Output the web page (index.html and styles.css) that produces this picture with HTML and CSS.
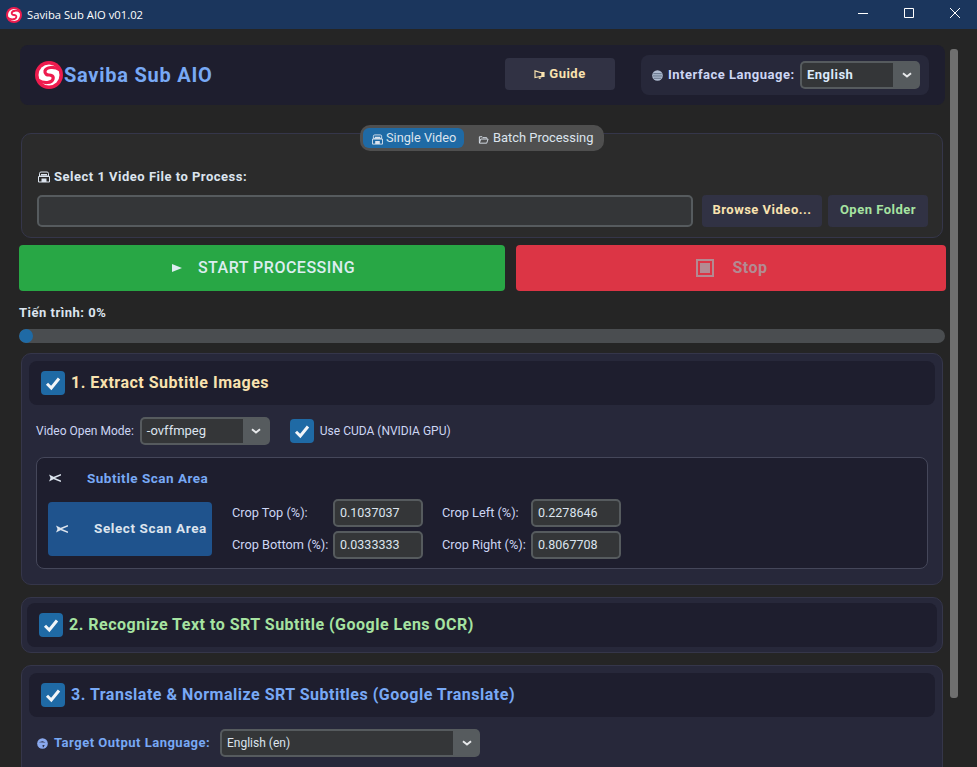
FILE: index.html
```html
<!DOCTYPE html>
<html lang="en">
<head>
<meta charset="utf-8">
<title>Saviba Sub AIO v01.02</title>
<link rel="stylesheet" href="styles.css">
</head>
<body>
<svg class="defs" width="0" height="0" aria-hidden="true">
  <symbol id="logo" viewBox="0 0 28 28">
    <circle cx="14" cy="14" r="14" fill="#ee1c4e"/>
    <circle cx="14" cy="14" r="10.5" fill="#fff"/>
    <path d="M25 9C19.500 5 11 6 10 10 9.500 13 12 14 14 14 16 14 19 15 18 18 17 22 9 23 3 19" fill="none" stroke="#ee1c4e" stroke-width="3.200"/>
  </symbol>
  <symbol id="floppy" viewBox="0 0 12 12">
    <path d="M1.500 2.500Q1.500 1 3 1H9Q10.500 1 10.500 2.500V5H1.500z" fill="none" stroke="currentColor"/>
    <path d="M.5 5.500H11.500V11H.5z" fill="none" stroke="currentColor"/>
    <path d="M3 3H9V4.500H3zM3.500 7.500H8.500V11H3.500z" fill="currentColor"/>
  </symbol>
  <symbol id="folder" viewBox="0 0 12 12">
    <path d="M1.500 9.500V3H4.500L5.500 4H9.500V5M1.500 10H9.500L11 5.500H3L1.500 10z" fill="none" stroke="currentColor"/>
  </symbol>
  <symbol id="scissors" viewBox="0 0 12 8">
    <path d="M0 .5 4 2.500 6.500 4 4 5.500 0 7.500 1.500 4z" fill="currentColor"/>
    <path d="M4.500 3.800 12 .8M4.500 4.200 12 7.200" stroke="currentColor" stroke-width="1.500" fill="none"/>
  </symbol>
  <symbol id="megaphone" viewBox="0 0 12 10">
    <path d="M11 1V8.500L4 7H1V3H4z" fill="none" stroke="currentColor" stroke-width="1.300"/>
    <path d="M1 3H4V7H1z" fill="currentColor"/>
    <path d="M4 7 5 9.500H6.500L6 7.500" fill="none" stroke="currentColor"/>
  </symbol>
  <symbol id="globe" viewBox="0 0 12 12">
    <circle cx="6" cy="6" r="5.800" fill="currentColor"/>
    <path d="M1.500 4H10.500M1 6.500H11M2 9H10" stroke="#5c6a80" stroke-width="1" fill="none"/>
  </symbol>
  <symbol id="earth" viewBox="0 0 12 12">
    <circle cx="6" cy="6" r="5.800" fill="currentColor"/>
    <path d="M2 4.500 6 3.500 9.500 5M6 7.500 8.500 8 6.500 10.500z" fill="#27283a"/>
  </symbol>
  <symbol id="check" viewBox="0 0 24 24">
    <path d="M6 12.800 10.300 17 18 7.500" fill="none" stroke="#f2f5f8" stroke-width="3"/>
  </symbol>
  <symbol id="chevron" viewBox="0 0 10 6">
    <path d="M1 1.200 5 4.500 9 1.200" fill="none" stroke="#e6e8ea" stroke-width="2"/>
  </symbol>
</svg>

<header class="titlebar">
  <svg class="titlebar-logo"><use href="#logo"/></svg>
  <span class="titlebar-text">Saviba Sub AIO v01.02</span>
  <div class="window-controls">
    <svg class="win-btn" viewBox="0 0 46 29"><path d="M18 13.500H28" stroke="#fff" fill="none"/></svg>
    <svg class="win-btn" viewBox="0 0 46 29"><path d="M18.500 8.500H27.500V17.500H18.500z" stroke="#fff" fill="none"/></svg>
    <svg class="win-btn" viewBox="0 0 46 29"><path d="M18 8 28 18M28 8 18 18" stroke="#fff" fill="none"/></svg>
  </div>
</header>

<main class="app">
  <div class="scrollbar"></div>
  <div class="content">
    <section class="hero">
      <div class="brand">
        <svg class="brand-logo"><use href="#logo"/></svg>
        <span class="brand-name">Saviba Sub AIO</span>
      </div>
      <button class="btn btn-guide"><svg class="ico-megaphone"><use href="#megaphone"/></svg>Guide</button>
      <div class="lang-panel">
        <svg class="ico-globe"><use href="#globe"/></svg>
        <span class="lang-label">Interface Language:</span>
        <div class="combo combo-lang">
          <div class="combo-field combo-field-bold">English</div>
          <div class="combo-arrow"><svg class="chevron"><use href="#chevron"/></svg></div>
        </div>
      </div>
    </section>

    <section class="input-group">
      <div class="tabs">
        <div class="tab tab-active"><svg class="ico-tab"><use href="#floppy"/></svg>Single Video</div>
        <div class="tab"><svg class="ico-tab"><use href="#folder"/></svg>Batch Processing</div>
      </div>
      <div class="field-label"><svg class="ico-floppy"><use href="#floppy"/></svg>Select 1 Video File to Process:</div>
      <div class="file-row">
        <input class="file-input" type="text" readonly>
        <button class="btn btn-browse">Browse Video...</button>
        <button class="btn btn-open">Open Folder</button>
      </div>
    </section>

    <div class="actions">
      <button class="action action-start"><span class="play"></span>START PROCESSING</button>
      <button class="action action-stop"><span class="stop-icon"></span>Stop</button>
    </div>

    <div class="progress-label">Tiến trình: 0%</div>
    <div class="progress"><div class="progress-chunk"></div></div>

    <section class="card card-one">
      <div class="card-head">
        <span class="checkbox"><svg class="check"><use href="#check"/></svg></span>
        <h2 class="card-title title-yellow">1. Extract Subtitle Images</h2>
      </div>
      <div class="mode-row">
        <span class="plain-label">Video Open Mode:</span>
        <div class="combo combo-mode">
          <div class="combo-field combo-field-mode">-ovffmpeg</div>
          <div class="combo-arrow"><svg class="chevron"><use href="#chevron"/></svg></div>
        </div>
        <span class="checkbox checkbox-cuda"><svg class="check"><use href="#check"/></svg></span>
        <span class="plain-label">Use CUDA (NVIDIA GPU)</span>
      </div>
      <div class="scan">
        <div class="scan-title"><svg class="ico-scissors"><use href="#scissors"/></svg><span>Subtitle Scan Area</span></div>
        <div class="scan-body">
          <button class="btn-scan"><svg class="ico-scissors"><use href="#scissors"/></svg><span>Select Scan Area</span></button>
          <div class="crop-grid">
            <span class="crop-label">Crop Top (%):</span>
            <input class="crop-input" type="text" readonly value="0.1037037">
            <span class="crop-label crop-second">Crop Left (%):</span>
            <input class="crop-input" type="text" readonly value="0.2278646">
            <span class="crop-label">Crop Bottom (%):</span>
            <input class="crop-input" type="text" readonly value="0.0333333">
            <span class="crop-label crop-second">Crop Right (%):</span>
            <input class="crop-input" type="text" readonly value="0.8067708">
          </div>
        </div>
      </div>
    </section>

    <section class="card card-two">
      <div class="card-head">
        <span class="checkbox"><svg class="check"><use href="#check"/></svg></span>
        <h2 class="card-title title-green">2. Recognize Text to SRT Subtitle (Google Lens OCR)</h2>
      </div>
    </section>

    <section class="card card-three">
      <div class="card-head">
        <span class="checkbox"><svg class="check"><use href="#check"/></svg></span>
        <h2 class="card-title title-blue">3. Translate &amp; Normalize SRT Subtitles (Google Translate)</h2>
      </div>
      <div class="target-row">
        <svg class="ico-earth"><use href="#earth"/></svg>
        <span class="target-label">Target Output Language:</span>
        <div class="combo combo-target">
          <div class="combo-field">English (en)</div>
          <div class="combo-arrow"><svg class="chevron"><use href="#chevron"/></svg></div>
        </div>
      </div>
    </section>
  </div>
</main>
</body>
</html>
```
FILE: styles.css
```css
* { box-sizing: border-box; }
html, body { margin: 0; padding: 0; height: 100%; overflow: hidden; background: #252525; }
body { font-family: Roboto, "Liberation Sans", sans-serif; font-size: 12px; color: #cdd6f4; width: 977px; height: 767px; }
.defs { display: block; height: 0; }
button { font-family: inherit; border: 0; padding: 0; margin: 0; }
input { font-family: inherit; margin: 0; outline: 0; }

.titlebar { height: 29px; background: #1b365d; display: flex; align-items: center; color: #fff; }
.titlebar-logo { width: 16px; height: 16px; margin-left: 6px; }
.titlebar-text { font-family: "Open Sans", "Noto Sans", sans-serif; font-size: 11.25px; margin-left: 5px; }
.window-controls { margin-left: auto; display: flex; margin-right: -1px; }
.win-btn { width: 46px; height: 29px; display: block; }

.app { position: relative; height: 738px; overflow: hidden; }
.scrollbar { position: absolute; left: 950px; top: 20px; width: 8px; height: 649px; background: #6f6f6f; border-radius: 3px; }
.content { width: 927px; margin-left: 19px; padding-top: 16px; display: flex; flex-direction: column; }

.hero { margin-left: 1px; width: 925px; height: 60px; background: #1e1e2e; border-radius: 8px; display: flex; align-items: center; }
.brand { display: flex; align-items: center; margin-left: 15px; width: 470px; }
.brand-logo { width: 28px; height: 28px; margin-top: -1px; }
.brand-name { font-size: 20px; font-weight: 700; color: #78a9f5; letter-spacing: .75px; margin-left: 1px; margin-top: -1px; }
.btn { border-radius: 4px; background: #313244; font-weight: 700; font-size: 13px; letter-spacing: .5px; height: 32px; padding-bottom: 2px; }
.btn-guide { width: 110px; color: #f9e2af; margin-top: -2px; display: flex; align-items: center; justify-content: center; gap: 4px; }
.ico-megaphone { width: 11px; height: 9px; color: #f9e2af; transform: scaleX(-1); margin-top: 2px; }
.lang-panel { margin-left: 26px; width: 288px; height: 40px; background: #27283a; border-radius: 8px; display: flex; align-items: center; padding-left: 11px; }
.ico-globe { width: 11px; height: 11px; color: #aebbd0; margin-top: 1px; flex: none; }
.lang-label { font-weight: 700; font-size: 13px; margin-left: 5px; margin-top: -1px; letter-spacing: .5px; width: 132px; color: #cdd6f4; white-space: nowrap; }

.combo { display: flex; height: 28px; border-radius: 5px; background: #565b5e; overflow: hidden; flex: none; }
.combo-field { flex: 1; margin: 2px 0 2px 2px; background: #343638; border-radius: 3px 0 0 3px; color: #dce4ee; padding-left: 5px; line-height: 24px; }
.combo-field-bold { font-weight: 700; font-size: 13px; color: #dbe9fb; letter-spacing: .5px; }
.combo-field-mode { font-size: 13px; }
.combo-arrow { width: 27px; display: flex; align-items: center; justify-content: center; }
.chevron { width: 10px; height: 6px; display: block; }
.combo-lang { width: 120px; }
.combo-mode { width: 130px; margin-left: 6px; }
.combo-target { width: 260px; }

.input-group { position: relative; margin-left: 2px; margin-top: 28px; width: 922px; height: 105px; background: #2b2b2b; border: 1px solid #35364a; border-radius: 10px; padding: 34px 14px 0 15px; }
.tabs { position: absolute; left: 338px; top: -9px; width: 244px; height: 26px; background: #4f4f4f; border-radius: 10px; display: flex; align-items: center; padding-left: 3px; }
.tab { display: flex; align-items: center; height: 20px; padding: 0 7px 0 9px; color: #dce4ee; font-size: 12.750px; border-radius: 6px; white-space: nowrap; line-height: 18px; }
.tab:last-child { margin-left: 7px; padding-left: 7px; font-size: 12.900px; }
.tab:last-child .ico-tab { margin-right: 4px; }
.tab-active { background: #1f6aa5; width: 101px; }
.ico-tab { width: 11px; height: 11px; margin-right: 3px; margin-top: 3px; color: #dce4ee; flex: none; }
.field-label { font-weight: 700; font-size: 13px; color: #dce4ee; letter-spacing: .5px; display: flex; align-items: center; height: 16px; }
.ico-floppy { width: 12px; height: 12px; margin-right: 4px; margin-top: 1px; margin-left: 1px; }
.file-row { display: flex; margin-top: 11px; }
.file-input { width: 656px; height: 32px; background: #343638; border: 2px solid #565b5e; border-radius: 5px; }
.btn-browse { width: 120px; margin-left: 9px; color: #f9e2af; padding-bottom: 4px; }
.btn-open { width: 100px; margin-left: 6px; color: #a6e3a1; padding-bottom: 4px; }

.actions { display: flex; margin-top: 7px; gap: 11px; }
.action { height: 46px; border-radius: 4px; font-size: 16px; font-weight: 500; letter-spacing: .5px; display: flex; align-items: center; justify-content: center; padding-bottom: 1px; }
.action-start { width: 486px; background: #28a745; color: #dcedf0; padding-left: 3px; }
.action-stop { width: 430px; background: #dc3545; color: #b38a92; font-weight: 700; padding-left: 2px; }
.play { width: 0; height: 0; border-left: 10px solid #dcedf0; border-top: 4.500px solid transparent; border-bottom: 4.500px solid transparent; margin-right: 16px; }
.stop-icon { width: 18px; height: 18px; border: 2px solid #b38a92; box-shadow: inset 0 0 0 2px #dc3545; background: #b38a92; margin-right: 18px; }

.progress-label { font-weight: 700; font-size: 13px; letter-spacing: .5px; color: #dce4ee; margin-top: 14px; height: 16px; line-height: 16px; }
.progress { margin-top: 8px; height: 14px; background: #4a4d50; border-radius: 7px; width: 926px; overflow: hidden; }
.progress-chunk { width: 14px; height: 14px; border-radius: 7px; background: #1f6aa5; }

.card { margin-left: 2px; width: 922px; margin-top: 12px; background: #27283a; border: 1px solid #35364a; border-radius: 10px; padding: 7px; }
.card-one { margin-top: 10px; height: 232px; }
.card-two { height: 56px; padding: 5px; }
.card-three { height: 140px; }
.card-head { height: 44px; background: #1e1e2e; border-radius: 8px; display: flex; align-items: center; padding-left: 12px; }
.checkbox { width: 24px; height: 24px; background: #1f6aa5; border-radius: 4px; display: block; flex: none; }
.check { width: 24px; height: 24px; display: block; }
.card-title { margin: 0 0 2px 6px; font-size: 16px; font-weight: 700; letter-spacing: .5px; white-space: nowrap; }
.title-yellow { color: #f9e2af; }
.title-green { color: #a6e3a1; }
.title-blue { color: #78a9f5; }

.mode-row { display: flex; align-items: center; height: 28px; margin-top: 12px; padding-left: 7px; }
.plain-label { color: #cdd6f4; font-size: 12px; }
.checkbox-cuda { margin-left: 20px; margin-right: 6px; }

.scan { margin: 12px 7px 0 7px; height: 112px; background: #1e1e2e; border: 1px solid #45475a; border-radius: 8px; padding: 0 11px; }
.scan-title { display: flex; align-items: center; height: 41px; }
.scan-title span { color: #78a9f5; font-weight: 700; font-size: 13.500px; letter-spacing: .5px; margin-left: 26px; margin-bottom: 2px; }
.scan-title .ico-scissors { margin-left: 1px; margin-bottom: 1px; }
.ico-scissors { width: 12px; height: 8px; color: #dce4ee; flex: none; }
.scan-body { display: flex; align-items: center; height: 60px; }
.btn-scan { width: 164px; height: 54px; background: #1f538d; border-radius: 4px; display: flex; align-items: center; padding-left: 8px; color: #dce4ee; }
.btn-scan span { font-weight: 700; font-size: 13.500px; letter-spacing: .6px; margin-left: 26px; margin-bottom: 2px; white-space: nowrap; }
.crop-grid { display: grid; grid-template-columns: 101px 90px 108px 90px; grid-auto-rows: 28px; row-gap: 4px; margin-left: 20px; align-items: center; }
.crop-label { color: #cdd6f4; font-size: 12.750px; white-space: nowrap; margin-bottom: 2px; }
.crop-second { padding-left: 19px; }
.crop-input { width: 90px; height: 28px; background: #343638; border: 2px solid #565b5e; border-radius: 5px; color: #dce4ee; font-size: 12.500px; padding: 0 0 2px 5px; }

.target-row { display: flex; align-items: center; height: 28px; margin-top: 12px; padding-left: 8px; }
.ico-earth { width: 11px; height: 11px; color: #8aa9ee; margin-top: 1px; flex: none; }
.target-label { color: #78a9f5; font-weight: 700; font-size: 13px; margin-left: 6px; margin-bottom: 2px; letter-spacing: .5px; width: 166px; white-space: nowrap; }
```
